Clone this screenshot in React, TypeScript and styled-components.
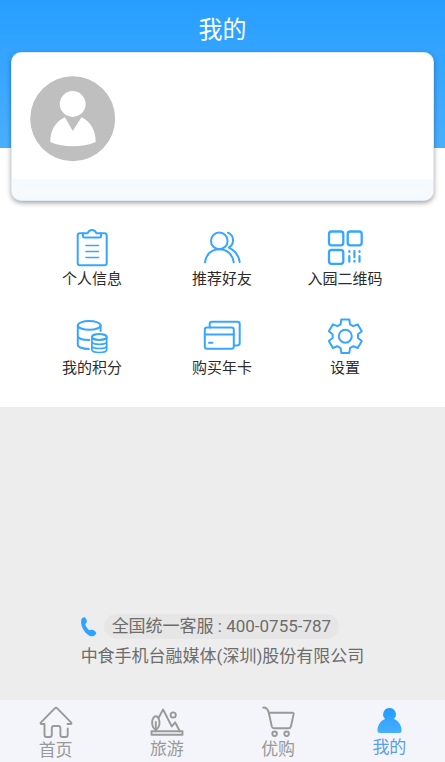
import React from "react";
import styled, { createGlobalStyle } from "styled-components";

const GlobalStyle = createGlobalStyle`
  *, *::before, *::after { box-sizing: border-box; }
  body {
    margin: 0;
    background: #ededed;
    font-family: Roboto, "Noto Sans CJK SC", sans-serif;
    color: #333;
  }
`;

const Page = styled.div`
  display: flex;
  flex-direction: column;
  min-height: 100vh;
`;

const Top = styled.div`
  background: linear-gradient(#279eff, #4aafff) top / 100% 148px no-repeat #fff;
`;

const Hero = styled.header`
  padding: 0 11px;
`;

const Title = styled.h1`
  margin: 0;
  padding: 12px 0 4px;
  font-size: 24px;
  font-weight: 400;
  line-height: 36px;
  text-align: center;
  color: #fff;
`;

const ProfileCard = styled.section`
  border-radius: 10px;
  overflow: hidden;
  background: #fff;
  border: 1px solid rgba(215, 230, 242, 0.8);
  box-shadow: 0 2px 5px rgba(0, 0, 0, 0.36);
`;

const ProfileBody = styled.div`
  padding: 23px 18px 17px;
`;

const AvatarButton = styled.button`
  display: block;
  padding: 0;
  border: 0;
  border-radius: 50%;
  background: none;
`;

const ProfileStrip = styled.div`
  height: 21px;
  background: #f5faff;
`;

const MenuGrid = styled.nav`
  display: grid;
  grid-template-columns: 130fr 130fr 116fr;
  row-gap: 27px;
  padding: 27px 42px 28px 27px;
`;

const MenuItem = styled.a`
  display: flex;
  flex-direction: column;
  align-items: center;
  font-size: 15px;
  line-height: 22px;
  white-space: nowrap;
  color: #2b2b2b;
  text-decoration: none;
`;

const LineIcon = styled.svg`
  display: block;
  width: 40px;
  height: 40px;
  fill: none;
  stroke: #38a6ff;
  stroke-width: 2;
  stroke-linecap: round;
  stroke-linejoin: round;
`;

const Main = styled.main`
  flex: 1;
  display: flex;
  flex-direction: column;
  justify-content: flex-end;
  align-items: center;
  padding: 31px 16px;
`;

const Contact = styled.address`
  display: flex;
  flex-direction: column;
  gap: 5px;
  font-size: 17px;
  font-style: normal;
  line-height: 25px;
  color: #6c6c6c;
`;

const PhoneRow = styled.div`
  display: flex;
  align-items: center;
  gap: 7px;
`;

const PhonePill = styled.a`
  padding: 0 8px;
  border-radius: 13px;
  background: #e6e6e6;
  color: inherit;
  text-decoration: none;
  white-space: nowrap;
`;

const TabBar = styled.nav`
  display: grid;
  grid-template-columns: repeat(4, 1fr);
  padding-top: 6px;
  background: #f3f5fa;
`;

const Tab = styled.a<{ $active?: boolean }>`
  display: flex;
  flex-direction: column;
  align-items: center;
  font-size: 17px;
  line-height: 24px;
  color: ${(p) => (p.$active ? "#5c9de8" : "#999")};
  text-decoration: none;
`;

const TabIcon = styled.svg`
  display: block;
  fill: none;
  stroke: #999;
  stroke-width: 1.9;
  stroke-linecap: round;
  stroke-linejoin: round;
`;

function gearPath(cx: number, cy: number) {
  const tooth = [[-4.7, -11.9], [-4, -16.7], [4, -16.7], [4.7, -11.9]];
  const points: string[] = [];
  for (let i = 0; i < 6; i++) {
    const a = (i * Math.PI) / 3;
    for (const [x, y] of tooth) {
      const px = cx + x * Math.cos(a) - y * Math.sin(a);
      const py = cy + x * Math.sin(a) + y * Math.cos(a);
      points.push(`${px.toFixed(2)} ${py.toFixed(2)}`);
    }
  }
  return `M${points.join("L")}Z`;
}

const menu = [
  {
    label: "个人信息",
    icon: (
      <>
        <path d="M11 5.300H8q-2.300 0-2.300 2.300V35q0 2.300 2.300 2.300h24.400q2.300 0 2.300-2.300V7.600q0-2.300-2.300-2.300H29" />
        <path d="M11 5.300h4.500C16.500 3 17.700 1.900 20 1.900s3.500 1.100 4.500 3.400H29V8q0 1.500-1.500 1.500h-15Q11 9.500 11 8Z" />
        <path d="M14 17.500h12.500M14 23.500h12.500M14 29.500h12.500" strokeWidth="1.600" />
      </>
    ),
  },
  {
    label: "推荐好友",
    icon: (
      <>
        <circle cx="17.300" cy="12.900" r="8.300" />
        <path d="M3 34.300C4 26.500 9.500 21.200 17.300 21.200S30.700 26.500 31.700 34.300" />
        <path d="M26 4.700c6.700 3 6.500 11.600.8 15C32.700 22.500 36.700 27.500 37.700 34" />
      </>
    ),
  },
  {
    label: "入园二维码",
    icon: (
      <>
        <g strokeWidth="2.300">
          <rect x="4" y="3.500" width="14.300" height="13.800" rx="2.500" />
          <rect x="22.700" y="3.500" width="14" height="13.800" rx="2.500" />
          <rect x="4" y="22" width="14.300" height="13.800" rx="2.500" />
        </g>
        <path d="M24.300 23v1M24.300 28.200v5.500M29.400 23v6.300M29.400 32.900v.800M34.500 23v1M34.500 28.200v5.500" strokeWidth="2.200" />
      </>
    ),
  },
  {
    label: "我的积分",
    icon: (
      <>
        <ellipse cx="17.200" cy="8.400" rx="11.400" ry="4.300" />
        <path d="M5.800 8.400v19.400c0 2.400 4.700 4.200 11 4.200M5.800 18.800c0 2.600 4.700 4.300 11.500 4.300M28.600 8.400v5.600" />
        <ellipse cx="27.300" cy="20" rx="7.400" ry="2.900" />
        <path d="M19.900 20v12.500c0 4 14.800 4 14.800 0V20M19.900 24.500c0 3.700 14.800 3.700 14.800 0M19.900 28.700c0 3.700 14.800 3.700 14.800 0" strokeWidth="1.700" />
      </>
    ),
  },
  {
    label: "购买年卡",
    icon: (
      <>
        <rect x="2.800" y="10.500" width="29" height="21.200" rx="2.300" />
        <path d="M2.800 17.500h29M7 25.700h3.500M7.700 10.500V7q0-2.200 2.200-2.200h25.500q2.300 0 2.300 2.300v19q0 2.300-2.300 2.300h-3" />
      </>
    ),
  },
  {
    label: "设置",
    icon: (
      <>
        <path d={gearPath(20.3, 19.2)} />
        <circle cx="20.300" cy="19.200" r="6.500" />
      </>
    ),
  },
];

const tabs = [
  {
    label: "首页",
    height: 32,
    icon: (
      <path d="M5.500 18H2.800q-2-.200-.800-1.600L16 2.200q1-1 2 0l14 14.200q1.200 1.400-.8 1.600H28.500M5.500 18v11q0 2 2 2h3.300q2 0 2-2v-7q0-2 2-2h4.600q2 0 2 2v7q0 2 2 2h3.300q2 0 2-2v-6.500" />
    ),
  },
  {
    label: "旅游",
    height: 31,
    icon: (
      <>
        <ellipse cx="5.800" cy="16.800" rx="3.700" ry="6.500" />
        <path d="M5.800 16v9.300M8.500 12l4.600-8.500 8.700 17 3.300-4.200 4.700 9" />
        <circle cx="23.200" cy="9" r="2.600" />
        <rect x="1.500" y="25.300" width="31" height="3.500" />
      </>
    ),
  },
  {
    label: "优购",
    height: 31,
    icon: (
      <>
        <path d="M2.200 1.600c3.300-.3 4.500 1.200 5.600 5.100l3 13.800q.5 1.800 2.300 1.800h14.500q1.900 0 2.300-1.800L32.600 8.300q.3-1.600-1.300-1.600H7.800" />
        <circle cx="13.600" cy="27.800" r="2.300" />
        <circle cx="25.600" cy="27.800" r="2.300" />
      </>
    ),
  },
  {
    label: "我的",
    height: 29,
    active: true,
    icon: (
      <>
        <defs>
          <linearGradient id="person" x1="0" y1="2" x2="0" y2="27" gradientUnits="userSpaceOnUse">
            <stop stopColor="#209cff" />
            <stop offset="1" stopColor="#48afff" />
          </linearGradient>
        </defs>
        <path
          d="M17.500 1.900a6.400 6.400 0 0 1 4.400 11C26.500 14.600 29.600 19 29.600 24.500q0 2.500-2.500 2.500H8q-2.500 0-2.500-2.500C5.500 19 8.500 14.600 13.100 12.900a6.400 6.400 0 0 1 4.400-11Z"
          fill="url(#person)"
          stroke="none"
        />
      </>
    ),
  },
];

export default function App() {
  return (
    <Page>
      <GlobalStyle />
      <Top>
        <Hero>
          <Title>我的</Title>
          <ProfileCard>
            <ProfileBody>
              <AvatarButton type="button" aria-label="头像">
                <svg width="86" height="86" viewBox="0 0 86 86" display="block">
                  <circle cx="42.700" cy="42.700" r="42.500" fill="#bfbfbf" />
                  <g fill="#fff">
                    <circle cx="42.700" cy="28" r="12.900" />
                    <path d="M35 41.300 42.700 55l8.800-13.700C60.500 45.500 66 55 65.700 66c-14 5.800-32 5.800-45.400 0C20 55 25.500 45.500 35 41.300Z" />
                  </g>
                </svg>
              </AvatarButton>
            </ProfileBody>
            <ProfileStrip />
          </ProfileCard>
        </Hero>
        <MenuGrid aria-label="功能">
          {menu.map((item) => (
            <MenuItem key={item.label} href="#">
              <LineIcon viewBox="0 0 40 40" aria-hidden="true">{item.icon}</LineIcon>
              {item.label}
            </MenuItem>
          ))}
        </MenuGrid>
      </Top>
      <Main>
        <Contact>
          <PhoneRow>
            <svg width="16" height="20" viewBox="0 0 16 20" aria-hidden="true">
              <path
                d="M1.700.800C3.500-.300 4.300.200 5.300 2.200c1 2 .9 3-.5 4.200-.8.700-.3 2.300 1 4.200 1.300 2 2.600 3 3.700 2.500 1.600-.7 2.500-.5 4.200.8 1.900 1.400 2 2.200.6 3.900-1.700 2-4.500 2-7.300-.1C2.800 14.700.300 9.500.100 5.200 0 3 .5 1.500 1.700.800Z"
                fill="#2ea3ff"
              />
            </svg>
            <PhonePill href="tel:4000755787">全国统一客服 : 400-0755-787</PhonePill>
          </PhoneRow>
          <span>中食手机台融媒体(深圳)股份有限公司</span>
        </Contact>
      </Main>
      <TabBar aria-label="主导航">
        {tabs.map((tab) => (
          <Tab key={tab.label} href="#" $active={tab.active} aria-current={tab.active ? "page" : undefined}>
            <TabIcon width="34" height={tab.height} viewBox={`0 0 34 ${tab.height}`} aria-hidden="true">
              {tab.icon}
            </TabIcon>
            {tab.label}
          </Tab>
        ))}
      </TabBar>
    </Page>
  );
}
